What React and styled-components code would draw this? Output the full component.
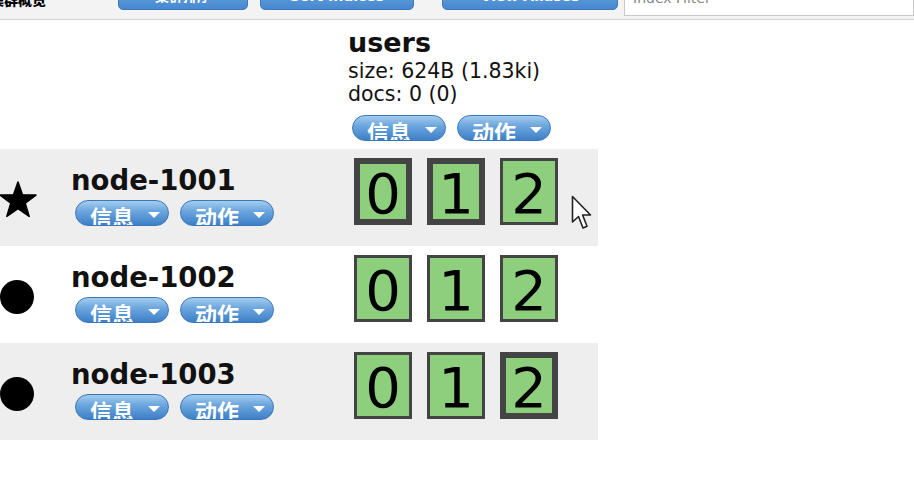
import styled, { createGlobalStyle } from 'styled-components';

const GlobalStyle = createGlobalStyle`
	html, body {
		margin: 0;
		padding: 0;
		background: #ffffff;
		font-family: "DejaVu Sans", Verdana, sans-serif;
		overflow: hidden;
	}
`;

const nodes = [
	{ name: 'node-1001', master: true, primaries: [0, 1] },
	{ name: 'node-1002', master: false, primaries: [] },
	{ name: 'node-1003', master: false, primaries: [2] },
];

function Pill({ label }) {
	return (
		<PillButton>
			<span>{label}</span>
			<Caret />
		</PillButton>
	);
}

function Star() {
	return (
		<svg width="38" height="38" viewBox="0 0 36 36">
			<path
				d="M18 1 L22.2 13 L35 13.3 L24.8 21 L28.6 33.5 L18 26.2 L7.4 33.5 L11.2 21 L1 13.3 L13.8 13 Z"
				fill="#000"
				stroke="#000"
				strokeWidth="1.5"
				strokeLinejoin="round"
			/>
		</svg>
	);
}

function Cursor() {
	return (
		<svg width="22" height="36" viewBox="0 0 22 36">
			<path
				d="M1.5 1.5 L1.5 27 L7.5 21.5 L12 33 L16 31.3 L11.6 20 L19.5 20 Z"
				fill="#fff"
				stroke="#222"
				strokeWidth="1.6"
				strokeLinejoin="round"
			/>
		</svg>
	);
}

function App() {
	return (
		<Page>
			<GlobalStyle />
			<Toolbar>
				<Title>集群概览</Title>
				<ToolButton $w={130} $ml={72}>集群排序</ToolButton>
				<ToolButton $w={154} $ml={12}>Sort Indices</ToolButton>
				<ToolButton $w={176} $ml={28}>View Aliases</ToolButton>
				<Filter placeholder="Index Filter" />
			</Toolbar>

			<Table>
				<HeaderRow>
					<Cell />
					<Cell />
					<IndexCell>
						<IndexName>users</IndexName>
						<Meta>size: 624B (1.83ki)</Meta>
						<Meta>docs: 0 (0)</Meta>
						<Pills>
							<Pill label="信息" />
							<Pill label="动作" />
						</Pills>
					</IndexCell>
				</HeaderRow>

				{nodes.map((node, i) => (
					<Row key={node.name} $striped={i % 2 === 0}>
						<IconCell>{node.master ? <Star /> : <Dot />}</IconCell>
						<NameCell>
							<NodeName>{node.name}</NodeName>
							<Pills>
								<Pill label="信息" />
								<Pill label="动作" />
							</Pills>
						</NameCell>
						<ShardCell>
							{[0, 1, 2].map((s) => (
								<Shard key={s} $primary={node.primaries.includes(s)}>
									{s}
								</Shard>
							))}
						</ShardCell>
					</Row>
				))}
			</Table>

			<Pointer>
				<Cursor />
			</Pointer>
		</Page>
	);
}

const Page = styled.div`
	position: relative;
	width: 914px;
	height: 489px;
`;

const Toolbar = styled.div`
	display: flex;
	align-items: flex-end;
	height: 19px;
	overflow: hidden;
	background: #f3f3f3;
	border-bottom: 1px solid #d4d4d4;
`;

const Title = styled.div`
	margin-left: -10px;
	margin-bottom: 12px;
	font: 900 14px/16px "Noto Sans CJK SC", sans-serif;
	color: #000;
	white-space: nowrap;
`;

const ToolButton = styled.button`
	box-sizing: border-box;
	width: ${(p) => p.$w}px;
	margin-left: ${(p) => p.$ml}px;
	margin-bottom: 9px;
	height: 28px;
	flex-shrink: 0;
	border: 1px solid #3b79bc;
	border-radius: 0 0 5px 5px;
	background: linear-gradient(to bottom, #74aee3, #4688cf);
	color: #fff;
	font: bold 14px/20px "DejaVu Sans", "Noto Sans CJK SC", sans-serif;
	padding: 0;
`;

const Filter = styled.input`
	box-sizing: border-box;
	flex: 1;
	min-width: 0;
	margin-left: 6px;
	margin-bottom: 3px;
	height: 36px;
	border: 1px solid #c8c8c8;
	background: #fff;
	font: 14px "DejaVu Sans", sans-serif;
	padding: 0 8px;
	&::placeholder {
		color: #888;
	}
`;

const Table = styled.div`
	width: 598px;
`;

const HeaderRow = styled.div`
	display: grid;
	grid-template-columns: 71px 277px 250px;
`;

const Row = styled.div`
	display: grid;
	grid-template-columns: 71px 277px 250px;
	height: 97px;
	background: ${(p) => (p.$striped ? '#eeeeee' : '#ffffff')};
`;

const Cell = styled.div``;

const IndexCell = styled.div`
	padding: 8px 0 8px 0;
`;

const IndexName = styled.div`
	font-weight: bold;
	font-size: 27px;
	line-height: 30px;
	color: #111;
	margin-bottom: 2px;
`;

const Meta = styled.div`
	font-size: 20.5px;
	line-height: 23px;
	color: #111;
`;

const Pills = styled.div`
	display: flex;
	gap: 11px;
	margin-left: 4px;
	margin-top: 9px;
`;

const PillButton = styled.button`
	box-sizing: border-box;
	display: flex;
	align-items: flex-start;
	width: 94px;
	height: 26px;
	padding: 3px 0 0 14px;
	border: 1px solid #3c78b9;
	border-radius: 13px;
	overflow: hidden;
	background: linear-gradient(to bottom, #a4cdef 0%, #6ea7de 40%, #3d7fc7 100%);
	color: #fff;
	font: bold 22px/24px "Noto Sans CJK SC", sans-serif;
	cursor: pointer;
`;

const Caret = styled.span`
	margin-left: 14px;
	margin-top: 8px;
	width: 0;
	height: 0;
	border-left: 6px solid transparent;
	border-right: 6px solid transparent;
	border-top: 6px solid #fff;
`;

const IconCell = styled.div`
	display: flex;
	align-items: center;
	margin-left: -1px;
	padding-top: 5px;
`;

const Dot = styled.div`
	margin-left: 1px;
	width: 34px;
	height: 34px;
	border-radius: 50%;
	background: #000;
`;

const NameCell = styled.div`
	padding-top: 16px;
	& > div:last-child {
		margin-top: 5px;
	}
`;

const NodeName = styled.div`
	font-weight: bold;
	font-size: 27.5px;
	line-height: 30px;
	color: #111;
`;

const ShardCell = styled.div`
	display: flex;
	align-items: flex-start;
	gap: 15px;
	padding: 9px 0 0 6px;
`;

const Shard = styled.div`
	box-sizing: border-box;
	width: 58px;
	height: 67px;
	background: #8ecf7e;
	border: ${(p) => (p.$primary ? '6px' : '3px')} solid #444;
	display: flex;
	align-items: center;
	justify-content: center;
	font-size: 56px;
	line-height: 1;
	color: #000;
	padding-top: 4px;
`;

const Pointer = styled.div`
	position: absolute;
	left: 571px;
	top: 195px;
	line-height: 0;
`;

export default App;
